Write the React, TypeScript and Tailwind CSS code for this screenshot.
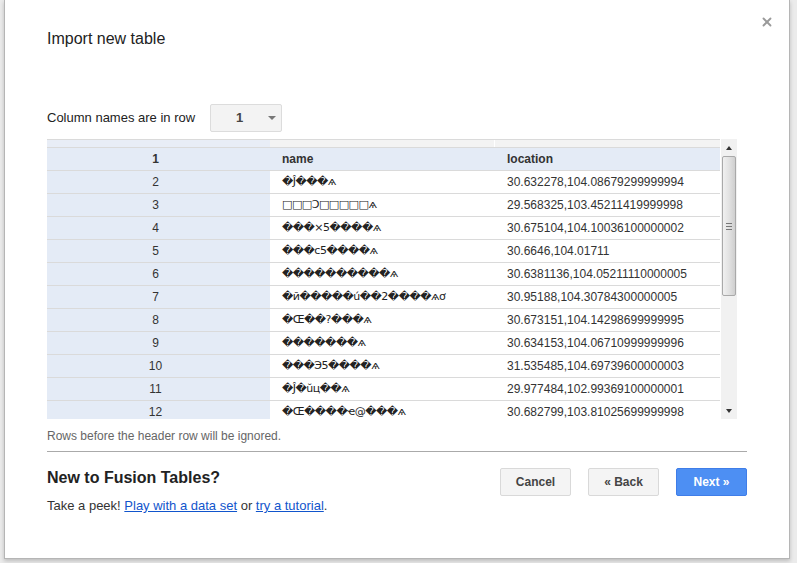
import { X } from "lucide-react"

type rowType = {
    n: number
    name: string
    location: string
}

const rows: rowType[] = [
    { n: 2, name: "\uFFFDĴ\uFFFD\uFFFD\uFFFDѧ", location: "30.632278,104.08679299999994" },
    { n: 3, name: "□□□Ͻ□□□□□ѧ", location: "29.568325,103.45211419999998" },
    { n: 4, name: "\uFFFD\uFFFD\uFFFD×5\uFFFD\uFFFD\uFFFD\uFFFDѧ", location: "30.675104,104.10036100000002" },
    { n: 5, name: "\uFFFD\uFFFD\uFFFDc5\uFFFD\uFFFD\uFFFD\uFFFDѧ", location: "30.6646,104.01711" },
    { n: 6, name: "\uFFFD\uFFFD\uFFFD\uFFFD\uFFFD\uFFFD\uFFFD\uFFFD\uFFFD\uFFFDѧ", location: "30.6381136,104.05211110000005" },
    { n: 7, name: "\uFFFDй\uFFFD\uFFFD\uFFFD\uFFFD\uFFFDú\uFFFD\uFFFD2\uFFFD\uFFFD\uFFFD\uFFFDѧơ", location: "30.95188,104.30784300000005" },
    { n: 8, name: "\uFFFDŒ\uFFFD\uFFFD?\uFFFD\uFFFD\uFFFDѧ", location: "30.673151,104.14298699999995" },
    { n: 9, name: "\uFFFD\uFFFD\uFFFD\uFFFD\uFFFD\uFFFD\uFFFDѧ", location: "30.634153,104.06710999999996" },
    { n: 10, name: "\uFFFD\uFFFD\uFFFDЭ5\uFFFD\uFFFD\uFFFD\uFFFDѧ", location: "31.535485,104.69739600000003" },
    { n: 11, name: "\uFFFDĴ\uFFFDŭц\uFFFD\uFFFDѧ", location: "29.977484,102.99369100000001" },
    { n: 12, name: "\uFFFDŒ\uFFFD\uFFFD\uFFFD\uFFFDҽ@\uFFFD\uFFFD\uFFFDѧ", location: "30.682799,103.81025699999998" },
]

export default function App() {
    return <div className="w-[797px] h-[563px] bg-[#ebebeb] overflow-hidden font-['Liberation_Sans',Arial,sans-serif]">
        <div className="relative ml-[4px] w-[786px] h-[559px] bg-white border-x border-b border-[#b5b5b5] shadow-[0_2px_4px_rgba(0,0,0,0.2)] pl-[42px] pr-[42px]">
            <button className="absolute right-[15px] top-[15px] text-[#9a9a9a]">
                <X size={14} strokeWidth={3.2} />
            </button>

            <div className="pt-[29px] text-[16px] leading-[20px] text-[#222]">Import new table</div>

            <div className="mt-[55px] flex items-center">
                <div className="w-[163px] text-[13px] text-[#222]">Column names are in row</div>
                <div className="w-[72px] h-[28px] flex items-center bg-[#f3f3f3] border border-[#dcdcdc] rounded-[2px]">
                    <span className="w-[57px] text-center text-[13px] font-bold text-[#444]">1</span>
                    <span className="w-0 h-0 border-x-[4px] border-x-transparent border-t-[4px] border-t-[#777]"></span>
                </div>
            </div>

            <div className="mt-[7px] flex h-[280px]">
                <div className="w-[673px] overflow-hidden border-t border-[#dadada]">
                    <div className="grid grid-cols-[223px_225px_225px] h-[8px] border-b border-[#dadada]">
                        <div className="bg-[#e8edf6]"></div>
                        <div className="bg-[#f3f3f3] border-r border-white"></div>
                        <div className="bg-[#f3f3f3]"></div>
                    </div>
                    <div className="grid grid-cols-[223px_225px_225px] h-[23px] items-center bg-[#e4ebf6] border-b border-[#dadada] text-[12px] font-bold text-[#333]">
                        <div className="text-center pr-[6px]">1</div>
                        <div className="pl-[12px]">name</div>
                        <div className="pl-[12px]">location</div>
                    </div>
                    {rows.map(r => <Row key={r.n} row={r} />)}
                </div>
                <ScrollBar />
            </div>

            <div className="mt-[9px] text-[12px] leading-[16px] text-[#666]">Rows before the header row will be ignored.</div>
            <div className="mt-[7px] h-px bg-[#aaa]"></div>

            <div className="flex justify-between">
                <div>
                    <div className="mt-[16px] text-[16px] leading-[20px] font-bold text-[#222]">New to Fusion Tables?</div>
                    <div className="mt-[10px] text-[13px] leading-[16px] text-[#333]">
                        Take a peek! <a className="text-[#1155cc] underline">Play with a data set</a> or <a className="text-[#1155cc] underline">try a tutorial</a>.
                    </div>
                </div>
                <div className="mt-[16px] flex gap-[17px]">
                    <Button label="Cancel" />
                    <Button label="« Back" />
                    <button className="w-[71px] h-[28px] rounded-[2px] bg-[#4d8ff3] border border-[#3f7de8] text-white text-[12px] font-bold">Next »</button>
                </div>
            </div>
        </div>
    </div>
}

function Button({ label }: { label: string }) {
    return <button className="w-[71px] h-[28px] rounded-[2px] bg-[#f4f4f4] border border-[#d9d9d9] text-[#444] text-[12px] font-bold">{label}</button>
}

function Row({ row }: { row: rowType }) {
    return <div className="grid grid-cols-[223px_225px_225px] h-[23px] items-center border-b border-[#dadada] text-[12px]">
        <div className="h-full flex items-center justify-center pr-[6px] bg-[#e4ebf6] text-[#333]">{row.n}</div>
        <div className="pl-[12px] text-[11px] text-[#222] whitespace-nowrap overflow-hidden font-['DejaVu_Sans',sans-serif] tracking-[-0.5px]">{row.name}</div>
        <div className="pl-[12px] text-[#333]">{row.location}</div>
    </div>
}

function ScrollBar() {
    return <div className="w-[16px] h-[280px] ml-[1px] bg-[#f1f1f1] flex flex-col items-center">
        <div className="h-[17px] flex items-center justify-center">
            <span className="w-0 h-0 border-x-[3.5px] border-x-transparent border-b-[4px] border-b-[#333]"></span>
        </div>
        <div className="w-[14px] h-[140px] border border-[#a9a9a9] rounded-[2px] bg-gradient-to-r from-[#f0f0f0] via-[#e2e2e2] to-[#cfcfcf] flex flex-col items-center justify-center gap-[2px]">
            <span className="w-[6px] h-px bg-[#777]"></span>
            <span className="w-[6px] h-px bg-[#777]"></span>
            <span className="w-[6px] h-px bg-[#777]"></span>
        </div>
        <div className="flex-1"></div>
        <div className="h-[17px] flex items-center justify-center">
            <span className="w-0 h-0 border-x-[3.5px] border-x-transparent border-t-[4px] border-t-[#333]"></span>
        </div>
    </div>
}
